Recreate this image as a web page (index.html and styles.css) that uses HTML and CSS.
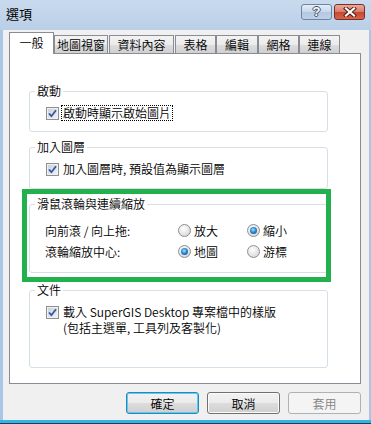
FILE: index.html
```html
<!DOCTYPE html>
<html lang="zh-Hant">
<head>
    <meta charset="UTF-8">
    <meta name="viewport" content="width=device-width, initial-scale=1.0">
    <title>選項</title>
    <link rel="stylesheet" href="styles.css">
</head>
<body>
    <div class="window">
        <div class="titlebar">
            <span class="title">選項</span>
            <div class="caption-buttons">
                <span class="cap-btn cap-help">?</span>
                <span class="cap-btn cap-close">
                    <svg width="14" height="10" viewBox="0 0 14 10">
                        <path d="M3 1.5 L11 8.5 M11 1.5 L3 8.5" stroke="#4a1a12" stroke-width="4" stroke-linecap="square" fill="none"/>
                        <path d="M3 1.5 L11 8.5 M11 1.5 L3 8.5" stroke="#ffffff" stroke-width="2.2" stroke-linecap="square" fill="none"/>
                    </svg>
                </span>
            </div>
        </div>

        <div class="client">
            <div class="tabs">
                <div class="tab active">一般</div>
                <div class="tab">地圖視窗</div>
                <div class="tab">資料內容</div>
                <div class="tab">表格</div>
                <div class="tab">編輯</div>
                <div class="tab">網格</div>
                <div class="tab">連線</div>
            </div>

            <div class="panel">
                <fieldset class="group group-start">
                    <legend>啟動</legend>
                    <label class="check-row">
                        <span class="checkbox"><svg width="9" height="9" viewBox="0 0 9 9"><path d="M1 4.5 L3.4 7.2 L8 1.2" stroke="#3356a8" stroke-width="1.8" fill="none"/></svg></span>
                        <span class="check-text focused">啟動時顯示啟始圖片</span>
                    </label>
                </fieldset>

                <fieldset class="group group-layer">
                    <legend>加入圖層</legend>
                    <label class="check-row">
                        <span class="checkbox"><svg width="9" height="9" viewBox="0 0 9 9"><path d="M1 4.5 L3.4 7.2 L8 1.2" stroke="#3356a8" stroke-width="1.8" fill="none"/></svg></span>
                        <span class="check-text">加入圖層時, 預設值為顯示圖層</span>
                    </label>
                </fieldset>

                <fieldset class="group group-wheel">
                    <legend>滑鼠滾輪與連續縮放</legend>
                    <div class="radio-grid">
                        <span class="radio-label">向前滾 / 向上拖:</span>
                        <label class="radio-opt"><span class="radio"></span>放大</label>
                        <label class="radio-opt"><span class="radio checked"></span>縮小</label>
                        <span class="radio-label">滾輪縮放中心:</span>
                        <label class="radio-opt"><span class="radio checked"></span>地圖</label>
                        <label class="radio-opt"><span class="radio"></span>游標</label>
                    </div>
                </fieldset>

                <fieldset class="group group-doc">
                    <legend>文件</legend>
                    <label class="check-row multi">
                        <span class="checkbox"><svg width="9" height="9" viewBox="0 0 9 9"><path d="M1 4.5 L3.4 7.2 L8 1.2" stroke="#3356a8" stroke-width="1.8" fill="none"/></svg></span>
                        <span class="check-text">載入 SuperGIS Desktop 專案檔中的樣版<br>(包括主選單, 工具列及客製化)</span>
                    </label>
                </fieldset>
            </div>

            <div class="dialog-buttons">
                <button class="btn btn-default">確定</button>
                <button class="btn">取消</button>
                <button class="btn" disabled>套用</button>
            </div>
        </div>

        <div class="highlight"></div>
    </div>
</body>
</html>
```

FILE: styles.css
```css
body {
    margin: 0;
    font-family: "Noto Sans CJK TC", "Liberation Sans", sans-serif;
    font-size: 12px;
    font-weight: 350;
    color: #000;
}
.window {
    position: relative;
    width: 371px;
    height: 424px;
    display: flex;
    flex-direction: column;
    background-color: #a9c6e6;
    box-shadow: inset 0 -1px #1c3c57, inset 0 -4px #33b4e4;
    overflow: hidden;
}

/* title bar */
.titlebar {
    height: 30px;
    flex: none;
    display: flex;
    justify-content: space-between;
    align-items: flex-start;
    background: linear-gradient(#c9daee, #b9cfe7);
}
.title {
    font-size: 13px;
    font-weight: 400;
    line-height: 16px;
    margin: 6px 0 0 6px;
}
.caption-buttons {
    display: flex;
    gap: 2px;
    margin: 4px 6px 0 0;
}
.cap-btn {
    width: 31px;
    height: 16px;
    box-sizing: border-box;
    border: 1px solid #6d84a3;
    border-radius: 3px;
    display: flex;
    align-items: center;
    justify-content: center;
}
.cap-help {
    background: linear-gradient(#e4edf7, #c7d7ea 50%, #b3c8e0 50%, #bdd1e8);
    color: #fff;
    font-family: "Liberation Sans", sans-serif;
    font-weight: bold;
    font-size: 13px;
    line-height: 14px;
    text-shadow: -1px 0 #3f526b, 1px 0 #3f526b, 0 -1px #3f526b, 0 1px #3f526b;
}
.cap-close {
    border-color: #7b2f24;
    background: linear-gradient(#eaa99c, #d97a66 50%, #c8462f 50%, #d5654c);
}

/* client area */
.client {
    flex: 1;
    margin: 0 2px 4px 3px;
    padding: 2px 8px 0 6px;
    background-color: #f0f0f0;
}

/* tabs */
.tabs {
    display: flex;
    align-items: flex-end;
    height: 21px;
}
.tab {
    height: 18px;
    box-sizing: border-box;
    border: 1px solid #898c95;
    border-bottom: none;
    background: linear-gradient(#f3f3f3, #ebebeb 50%, #dedede 50%, #d0d0d0);
    text-align: center;
    line-height: 17px;
}
.tab.active {
    position: relative;
    z-index: 1;
    height: 22px;
    margin-bottom: -1px;
    background: #fff;
    line-height: 19px;
}
.tab:nth-child(1) { width: 45px; }
.tab:nth-child(2) { width: 54px; }
.tab:nth-child(3) { width: 65px; margin-left: 1px; }
.tab:nth-child(4) { width: 41px; margin-left: 1px; }
.tab:nth-child(5) { width: 42px; }
.tab:nth-child(6) { width: 41px; }
.tab:nth-child(7) { width: 41px; }

.panel {
    height: 331px;
    box-sizing: border-box;
    border: 1px solid #898c95;
    background: #fff;
}

/* group boxes */
.group {
    width: 299px;
    box-sizing: border-box;
    margin: 0 0 0 19px;
    padding: 7px 0 10px 0;
    border: 1px solid #d5dfe5;
    border-radius: 3px;
    min-inline-size: 0;
}
.group legend {
    margin-left: 5px;
    padding: 0 2px;
    line-height: 14px;
}
.group-start { margin-top: 30px; }
.group-layer { margin-top: 8px; padding-bottom: 11px; }
.group-wheel { margin-top: 8px; padding-top: 9px; }
.group-doc { margin-top: 10px; padding-bottom: 31px; }

.check-row {
    display: flex;
    align-items: center;
    height: 16px;
    margin-left: 16px;
}
.check-row.multi {
    align-items: flex-start;
    height: auto;
    line-height: 16px;
}
.check-row.multi .checkbox {
    margin-top: 2px;
}
.checkbox {
    flex: none;
    width: 13px;
    height: 13px;
    box-sizing: border-box;
    border: 1px solid #8f8f8f;
    background: linear-gradient(135deg, #c9ced6, #f3f4f6);
    box-shadow: inset 0 0 0 1px #f1f1f1;
    display: flex;
    align-items: center;
    justify-content: center;
    margin-right: 2px;
}
.check-text {
    border: 1px solid transparent;
    padding: 0 1px;
    line-height: 14px;
}
.check-row.multi .check-text {
    line-height: 16px;
    border: none;
    padding: 0 2px;
}
.check-text.focused {
    border: 1px dotted #000;
}

/* radio grid */
.radio-grid {
    display: grid;
    grid-template-columns: 133px 69px auto;
    grid-auto-rows: 21px;
    align-items: center;
    margin-left: 15px;
}
.radio-opt {
    display: flex;
    align-items: center;
    gap: 3px;
}
.radio {
    width: 13px;
    height: 13px;
    box-sizing: border-box;
    border-radius: 50%;
    border: 1px solid #8e8f8f;
    background: radial-gradient(circle at 40% 35%, #ffffff, #e2e2e2 60%, #c9c9c9);
    display: flex;
    align-items: center;
    justify-content: center;
}
.radio.checked::after {
    content: "";
    width: 7px;
    height: 7px;
    border-radius: 50%;
    background: radial-gradient(circle at 45% 40%, #a6e4ff, #2a8ad4 45%, #0d3e7a);
}

/* dialog buttons */
.dialog-buttons {
    display: flex;
    justify-content: flex-end;
    gap: 8px;
    margin-top: 8px;
}
.btn {
    width: 73px;
    height: 22px;
    box-sizing: border-box;
    border: 1px solid #707070;
    border-radius: 3px;
    background: linear-gradient(#f2f2f2, #ebebeb 50%, #dddddd 50%, #cfcfcf);
    box-shadow: inset 0 0 0 1px #fbfbfb;
    font-family: inherit;
    font-size: 12px;
    font-weight: inherit;
    color: #000;
    padding: 0;
}
.btn-default {
    border-color: #3c7fb1;
    box-shadow: inset 0 0 0 1px #48d4fa;
}
.btn:disabled {
    border-color: #adb2b5;
    background: #f4f4f4;
    box-shadow: none;
    color: #838383;
}

/* annotation frame */
.highlight {
    position: absolute;
    left: 22px;
    top: 189px;
    width: 309px;
    height: 93px;
    box-sizing: border-box;
    border: 5px solid #22b14c;
}
```
